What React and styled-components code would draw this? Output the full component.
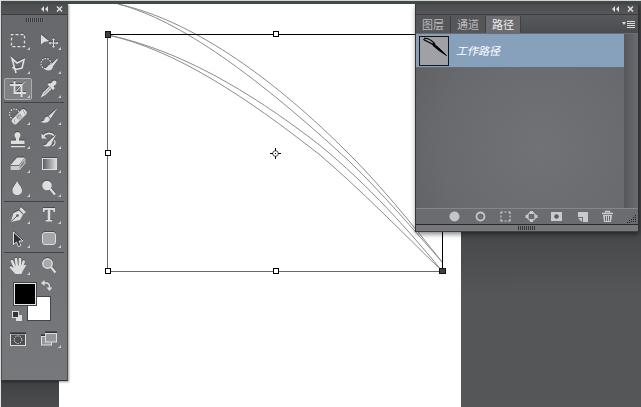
import { useState } from "react";
import styled, { createGlobalStyle } from "styled-components";

const GlobalStyle = createGlobalStyle`
  * {
    box-sizing: border-box;
  }
  body {
    margin: 0;
    font-family: "Liberation Sans", "Noto Sans CJK SC", sans-serif;
    background: #555657;
  }
  button {
    padding: 0;
    border: 0;
    background: none;
    color: inherit;
    font: inherit;
  }
  svg {
    display: block;
  }
`;

const light = "#dcdddd";

const MarqueeIcon = () => (
  <svg width="20" height="20" viewBox="0 0 20 20">
    <rect x="3.5" y="3.5" width="13" height="12" fill="none" stroke={light} strokeWidth="1.4" strokeDasharray="3 2" strokeDashoffset="1" />
  </svg>
);

const MoveIcon = () => (
  <svg width="20" height="20" viewBox="0 0 20 20">
    <path d="M2 3.500v10l3-2.600 5-1z" fill={light} />
    <path d="M14.500 8v8M10.500 12h8" stroke={light} fill="none" />
    <path d="M14.500 7l1.500 2h-3zM14.500 17l1.500-2h-3zM9.500 12l2-1.500v3zM19.500 12l-2-1.500v3z" fill={light} />
  </svg>
);

const LassoIcon = () => (
  <svg width="20" height="20" viewBox="0 0 20 20">
    <path d="M4 3.500l5 4.500 7-3.500-2 8.500-7 1.500zM6.500 14l-2-2M7 13.500l1 4.500" fill="none" stroke={light} strokeWidth="1.700" />
  </svg>
);

const QuickSelectIcon = () => (
  <svg width="20" height="20" viewBox="0 0 20 20">
    <circle cx="7" cy="8.500" r="5" fill="none" stroke={light} strokeWidth="1.200" strokeDasharray="1.500 1.200" />
    <path d="M18.500 3l-7 7 2 2 5-7z" fill={light} />
    <path d="M12 9.500c-2-.5-3 1-4 2.500-.7 1-2 1.500-3 1.500 2 2.800 8 3 9-1.500z" fill={light} />
  </svg>
);

const CropIcon = () => (
  <svg width="20" height="20" viewBox="0 0 20 20">
    <path d="M6.500 2v12H18M2 6h11.500v12" fill="none" stroke={light} strokeWidth="2" />
    <path d="M7 13.500L17 2.500" stroke={light} />
  </svg>
);

const EyedropperIcon = () => (
  <svg width="20" height="20" viewBox="0 0 20 20">
    <path d="M11.500 4.500l2.500-2.500c2.500-1.500 4.500 1 3 3L14.500 7.500l1.500 1.500-2 2-5.500-5.500L10 4z" fill={light} />
    <path d="M10.500 8l-6 6-1.500 3 3-1.500 6-6" fill="#8b8c8e" stroke={light} strokeWidth="1.300" />
  </svg>
);

const HealingIcon = () => (
  <svg width="20" height="20" viewBox="0 0 20 20">
    <circle cx="6.500" cy="8" r="5" fill="none" stroke={light} strokeWidth="1.200" strokeDasharray="1.500 1.200" />
    <rect x="2" y="7.500" width="18" height="6.500" rx="2.500" fill={light} transform="rotate(-45 11 10.500)" />
    <rect x="8.500" y="7.500" width="5" height="6.500" fill="#b9babb" transform="rotate(-45 11 10.500)" />
    <path d="M10 10h1M9 12h1M12 9h1M6 14h1M15 5h1M6 16h1M16 7h1" stroke="#77787a" />
  </svg>
);

const BrushIcon = () => (
  <svg width="20" height="20" viewBox="0 0 20 20">
    <path d="M18.500 2l-9 8 2 2.500z" fill={light} />
    <path d="M9 10.500c-2-.3-3 1-3.500 2.500C5 15 3.500 15.500 1.500 15.500c3 2.500 8.500 1.500 9.500-2.500z" fill={light} />
  </svg>
);

const StampIcon = () => (
  <svg width="20" height="20" viewBox="0 0 20 20">
    <path d="M8 9c0-1.500-1.500-2-1.500-4 0-4 6-4 6 0 0 2-1.500 2.500-1.500 4v1.500h5.500V14H3v-3.500h5z" fill={light} />
    <path d="M3 16.500h14" stroke={light} strokeWidth="1.500" />
  </svg>
);

const HistoryIcon = () => (
  <svg width="20" height="20" viewBox="0 0 20 20">
    <path d="M17.500 4l-7.500 7 2.500 2z" fill={light} />
    <path d="M11 11c-2 0-2.500 1.500-3 2.500-.7 1.200-2 1.500-4 1.500 3 2.500 8 2 9-2z" fill={light} />
    <path d="M4 6.500c3-4 8-4 11-1" fill="none" stroke={light} strokeWidth="1.600" />
    <path d="M2.500 3.500v5H8z" fill={light} />
    <path d="M15.500 10c1 2.500 0 5-2 6" fill="none" stroke={light} strokeWidth="1.200" />
  </svg>
);

const EraserIcon = () => (
  <svg width="20" height="20" viewBox="0 0 20 20">
    <path d="M9 3.500h8L11 11H2.500z" fill={light} />
    <path d="M2.500 11.700H11V16H2.500z" fill="#c9cacb" />
    <path d="M11.700 11.500L17 4.700v4.500L11.700 15.500z" fill="#88898b" stroke={light} strokeWidth=".8" />
  </svg>
);

const GradientIcon = () => (
  <svg width="20" height="20" viewBox="0 0 20 20">
    <defs>
      <linearGradient id="fade">
        <stop offset="0" stopColor="#57585a" />
        <stop offset="1" stopColor="#e0e0e0" />
      </linearGradient>
    </defs>
    <rect x="3.500" y="4.500" width="14" height="11" fill="url(#fade)" stroke={light} />
  </svg>
);

const DropIcon = () => (
  <svg width="20" height="20" viewBox="0 0 20 20">
    <path d="M9 2.500c1 3.500 5 6 5 10 0 6-9.500 6-9.500 0 0-4 3.500-6 4.500-10z" fill={light} />
  </svg>
);

const DodgeIcon = () => (
  <svg width="20" height="20" viewBox="0 0 20 20">
    <circle cx="8" cy="7.500" r="4.800" fill={light} />
    <path d="M11 10.500l5 6" stroke={light} strokeWidth="2.200" />
  </svg>
);

const PenIcon = () => (
  <svg width="20" height="20" viewBox="0 0 20 20">
    <path d="M2.500 17L5.500 8l5.500-2.500 4 4-3 5.500z" fill={light} />
    <path d="M11.500 4.500L13 2l5 5-2.500 2z" fill={light} />
    <path d="M3 16.500l6-5.500" stroke="#5d5e60" />
    <circle cx="9.500" cy="10.500" r="1.300" fill="#5d5e60" />
  </svg>
);

const TypeIcon = () => (
  <svg width="20" height="20" viewBox="0 0 20 20">
    <path d="M4 3h12v4h-1.300c-.2-1.500-.7-2.200-2-2.200h-1.400V14c0 .8.500 1.200 2 1.200V16.500H6.700V15.200c1.500 0 2-.4 2-1.200V4.800H7.300c-1.300 0-1.800.7-2 2.200H4z" fill={light} />
  </svg>
);

const PathSelectIcon = () => (
  <svg width="20" height="20" viewBox="0 0 20 20">
    <path d="M5.500 3v12.500l3-2.500 2 4.500 2.500-1-2-4.500h4z" fill="#303133" stroke={light} />
  </svg>
);

const ShapeIcon = () => (
  <svg width="20" height="20" viewBox="0 0 20 20">
    <rect x="3.500" y="3.500" width="13" height="12" rx="2.500" fill="#a3a5a7" stroke={light} />
  </svg>
);

const HandIcon = () => (
  <svg width="20" height="20" viewBox="0 0 20 20">
    <path d="M4 5l3 7M8 3l1 8M12 3l-.3 8M15.700 5.500L13.500 12" stroke={light} strokeWidth="2.500" strokeLinecap="round" />
    <path d="M6.500 10h8l2.500-1.500c1-.3 1.500.8.8 1.500L15 14.500l-1.500 3.500H7.500L2 12c-.8-1.500.7-2 1.700-1.500L7 12.500z" fill={light} />
  </svg>
);

const ZoomIcon = () => (
  <svg width="20" height="20" viewBox="0 0 20 20">
    <circle cx="8.500" cy="7.500" r="4.700" fill="#a8a9ab" stroke={light} strokeWidth="1.500" />
    <path d="M12 11l4.500 5.500" stroke={light} strokeWidth="2.200" />
  </svg>
);

const QuickMaskIcon = () => (
  <svg width="16" height="13" viewBox="0 0 16 13">
    <rect x=".5" y="1" width="15" height="11.500" fill="#505153" stroke={light} />
    <path d="M0 .5h16" stroke="#333436" />
    <circle cx="8" cy="6.700" r="3.800" fill="none" stroke={light} strokeDasharray="1.400 1" />
  </svg>
);

const ScreenModeIcon = () => (
  <svg width="16" height="14" viewBox="0 0 16 14">
    <rect x=".5" y="4.500" width="10" height="8.500" fill="#95979a" stroke={light} />
    <rect x="4.500" y="1.500" width="11" height="8.500" fill="#95979a" stroke={light} />
    <path d="M4 .5h12M0 3.500h4" stroke="#333436" />
  </svg>
);

const SwapIcon = () => (
  <svg width="11" height="11" viewBox="0 0 11 11">
    <path d="M2 3h3q3.500 0 3.500 4v1" fill="none" stroke={light} strokeWidth="1.300" />
    <path d="M0 3l3.500-3v6zM8.500 11L5.500 7.500h6z" fill={light} />
  </svg>
);

const DefaultColorsIcon = () => (
  <svg width="10" height="10" viewBox="0 0 10 10">
    <rect x="4" y="4" width="6" height="6" fill={light} />
    <rect x=".5" y=".5" width="6" height="6" fill="#333436" stroke={light} />
  </svg>
);

const CollapseIcon = () => (
  <svg width="7" height="6" viewBox="0 0 7 6">
    <path d="M3 0v6L0 3zM7 0v6L4 3z" fill={light} />
  </svg>
);

const CloseIcon = () => (
  <svg width="7" height="6" viewBox="0 0 7 6">
    <path d="M1 .5l5 5M6 .5l-5 5" stroke={light} strokeWidth="1.500" />
  </svg>
);

const toolGroups = [
  [
    ["Rectangular marquee", MarqueeIcon],
    ["Move", MoveIcon],
    ["Polygonal lasso", LassoIcon],
    ["Quick selection", QuickSelectIcon],
    ["Crop", CropIcon],
    ["Eyedropper", EyedropperIcon],
  ],
  [
    ["Spot healing brush", HealingIcon],
    ["Brush", BrushIcon],
    ["Clone stamp", StampIcon],
    ["History brush", HistoryIcon],
    ["Eraser", EraserIcon],
    ["Gradient", GradientIcon],
    ["Blur", DropIcon],
    ["Dodge", DodgeIcon],
  ],
  [
    ["Pen", PenIcon],
    ["Type", TypeIcon],
    ["Path selection", PathSelectIcon],
    ["Rounded rectangle", ShapeIcon],
  ],
  [
    ["Hand", HandIcon],
    ["Zoom", ZoomIcon],
  ],
];

const WindowButtons = () => (
  <>
    <button aria-label="Collapse"><CollapseIcon /></button>
    <button aria-label="Close"><CloseIcon /></button>
  </>
);

const Toolbox = () => {
  const [tool, setTool] = useState("Crop");

  return (
    <ToolPanel aria-label="Tools">
      <TitleBar>
        <WindowButtons />
      </TitleBar>
      <GripArea>
        <Grip />
      </GripArea>
      {toolGroups.map((group, i) => (
        <ToolGroup key={i}>
          {group.map(([name, Icon]) => (
            <ToolButton
              key={name}
              aria-label={name}
              $active={tool === name}
              $flyout={name !== "Zoom"}
              onClick={() => setTool(name)}
            >
              <Icon />
            </ToolButton>
          ))}
        </ToolGroup>
      ))}
      <Colors>
        <Foreground aria-label="Foreground color" />
        <Background aria-label="Background color" />
        <SwapButton aria-label="Swap colors"><SwapIcon /></SwapButton>
        <ResetButton aria-label="Default colors"><DefaultColorsIcon /></ResetButton>
      </Colors>
      <ToolGroup>
        <ToolButton aria-label="Quick mask"><QuickMaskIcon /></ToolButton>
        <ToolButton aria-label="Screen mode" $flyout><ScreenModeIcon /></ToolButton>
      </ToolGroup>
    </ToolPanel>
  );
};

const handles = [[275, 34], [107, 153], [107, 271], [275, 271]];

const Artwork = () => (
  <svg width="402" height="403" viewBox="59 4 402 403">
    <g fill="none" stroke="#8c8c90">
      <path d="M118 4C180 20 258 77 350 162C382 193 414 230 442 262" />
      <path d="M118 4C190 20 268 74 343 148C378 182 412 224 442 262" />
      <path d="M108 35C175 50 245 96 320 155C360 189 402 232 442 271" />
      <path d="M108 35C180 50 250 92 313 140C358 175 402 222 442 271" />
    </g>
    <path d="M107 34.500H442.500V271" fill="none" stroke="#000" />
    <path d="M107.500 34V271.500H442" fill="none" stroke="#69696b" />
    {handles.map(([x, y]) => (
      <rect key={x + "-" + y} x={x - 1.5} y={y - 2.5} width="5" height="5" fill="#fff" stroke="#000" />
    ))}
    <rect x="105.500" y="31.500" width="5" height="6" fill="#3f4042" stroke="#111" />
    <rect x="439.500" y="268.500" width="6" height="5" fill="#3f4042" stroke="#111" />
    <circle cx="275.500" cy="153.500" r="2.800" fill="#fff" stroke="#333" strokeWidth=".9" />
    <path d="M275.500 148v3M275.500 156v3M270 153.500h3M278 153.500h3M275 153.500h1" stroke="#000" />
  </svg>
);

const footerActions = [
  ["Fill path", <circle cx="7.500" cy="7.500" r="5" fill="#c4c5c7" />],
  ["Stroke path", <circle cx="7.500" cy="7.500" r="4" fill="none" stroke="#c4c5c7" strokeWidth="1.800" />],
  [
    "Load path as selection",
    <path d="M3 5V3h2M6.500 3h2M10 3h2v2M12 6.500v2M12 10v2h-2M8.500 12h-2M5 12H3v-2M3 8.500v-2" fill="none" stroke="#c9cacc" strokeWidth="1.200" />,
  ],
  [
    "Make work path",
    <>
      <circle cx="7.500" cy="7.500" r="4" fill="none" stroke="#c9cacc" strokeWidth="1.300" />
      <path d="M6 2h3v3H6zM6 10h3v3H6zM1.500 6h3v3h-3zM10.500 6h3v3h-3z" fill="#c9cacc" />
    </>,
  ],
  [
    "Add mask",
    <>
      <path d="M2 3h11v9H2z" fill="#c9cacc" />
      <circle cx="7.500" cy="7.500" r="2.300" fill="#5b5c5f" />
    </>,
  ],
  ["New path", <path d="M3 3h10v10H8V8H3zM3 9h4v4z" fill="#c9cacc" />],
  [
    "Delete path",
    <>
      <path d="M2 4.500h11M5.500 3.500v-1h4v1" fill="none" stroke="#c9cacc" strokeWidth="1.400" />
      <path d="M3 6h9l-1 7H4z" fill="#c9cacc" />
      <path d="M5.500 7v5M7.500 7v5M9.500 7v5" stroke="#67686b" />
    </>,
  ],
];

const PathsPanel = () => {
  const [tab, setTab] = useState("路径");

  return (
    <Panel>
      <TitleBar>
        <WindowButtons />
      </TitleBar>
      <Tabs role="tablist">
        {["图层", "通道", "路径"].map((name) => (
          <Tab key={name} role="tab" aria-selected={tab === name} $active={tab === name} onClick={() => setTab(name)}>
            {name}
          </Tab>
        ))}
        <MenuButton aria-label="Panel menu">
          <svg width="13" height="9" viewBox="0 0 13 9">
            <path d="M0 2h4L2 5z" fill={light} />
            <path d="M5 1.500h8M5 3.500h8M5 5.500h8M5 7.500h8" stroke={light} />
          </svg>
        </MenuButton>
      </Tabs>
      <PanelBody>
        <PathList>
          <PathRow>
            <Thumb>
              <svg width="28" height="28" viewBox="0 0 28 28">
                <path d="M4 1.500c4-.5 7 1 11 5.500M3.500 2c1 2.500 5 2 10 6" fill="none" stroke="#111" strokeWidth="1.300" />
                <path d="M13 6l8 7 5.500 5.500L19 13.500l-6-5z" fill="#000" stroke="#000" />
              </svg>
            </Thumb>
            <PathName>工作路径</PathName>
          </PathRow>
        </PathList>
        <ScrollTrack />
      </PanelBody>
      <PanelFooter>
        {footerActions.map(([name, drawing]) => (
          <button key={name} aria-label={name}>
            <svg width="15" height="15" viewBox="0 0 15 15">{drawing}</svg>
          </button>
        ))}
        <ResizeCorner width="10" height="8" viewBox="0 0 10 8">
          <path d="M8.500 0v8M6.500 2v6M4.500 4v4M2.500 5v3M.5 7v1" stroke="#242527" strokeDasharray="1 1" />
        </ResizeCorner>
      </PanelFooter>
      <BottomBar>
        <Grip />
      </BottomBar>
    </Panel>
  );
};

export default function App() {
  return (
    <Desktop>
      <GlobalStyle />
      <Gutter />
      <Sheet>
        <Artwork />
      </Sheet>
      <RightGutter />
      <Toolbox />
      <PathsPanel />
    </Desktop>
  );
}

const Desktop = styled.div`
  position: relative;
  display: flex;
  min-height: 100vh;
  padding-top: 3px;
  background: #434b49;
  border-top: 1px solid #d4d6d5;
  border-left: 1px solid #e4e4e4;
`;

const Gutter = styled.div`
  flex: 0 0 58px;
  background: linear-gradient(#414244 380px, #4c4d4f);
`;

const RightGutter = styled.div`
  flex: 0 0 180px;
  background: linear-gradient(#454647 225px, #555657 290px);
`;

const Sheet = styled.main`
  flex: 1;
  min-width: 0;
  overflow: hidden;
  background: #fff;
`;

const ToolPanel = styled.aside`
  position: absolute;
  top: 3px;
  left: 0;
  width: 67px;
  padding-bottom: 28px;
  background: linear-gradient(#67686b, #717275 60%, #77787b);
  border-left: 1px solid #4c4d4f;
  border-right: 1px solid #4c4d4f;
  border-bottom: 1px solid #333436;
  box-shadow: 1px 1px 2px rgba(0, 0, 0, 0.4);
`;

const TitleBar = styled.header`
  display: flex;
  align-items: center;
  justify-content: flex-end;
  gap: 8px;
  height: 11px;
  padding-right: 4px;
  background: linear-gradient(#4b4c4f, #56575a);
  border-bottom: 1px solid #3b3c3e;
`;

const GripArea = styled.div`
  display: flex;
  justify-content: center;
  height: 13px;
  padding-top: 3px;
`;

const Grip = styled.div`
  width: 18px;
  height: 4px;
  background: repeating-linear-gradient(90deg, #353638 0 1px, #77787b 1px 2px);
`;

const ToolGroup = styled.div`
  display: grid;
  grid-template-columns: 28px 28px;
  column-gap: 3px;
  margin: 0 3px 0 2px;
  padding: 1px 0;
  & + & {
    border-top: 1px solid #424346;
  }
`;

const ToolButton = styled.button`
  position: relative;
  display: flex;
  align-items: center;
  justify-content: center;
  width: 28px;
  height: 22px;
  margin: 1px 0;
  border: 1px solid ${(p) => (p.$active ? "#acadae" : "transparent")};
  border-radius: 2px;
  background: ${(p) => (p.$active ? "#808184" : "none")};
  svg {
    flex: none;
    filter: drop-shadow(0 -1px 0 rgba(35, 36, 38, 0.5));
  }
  &::after {
    content: "";
    display: ${(p) => (p.$flyout ? "block" : "none")};
    position: absolute;
    right: 1px;
    bottom: 1px;
    border-left: 3px solid transparent;
    border-bottom: 3px solid #c9cacb;
  }
`;

const Colors = styled.div`
  position: relative;
  height: 47px;
`;

const Foreground = styled.button`
  position: absolute;
  z-index: 1;
  top: 3px;
  left: 11px;
  width: 24px;
  height: 24px;
  background: #000;
  border: 1px solid #444547;
  box-shadow: inset 0 0 0 1px #e8e8e8;
`;

const Background = styled.button`
  position: absolute;
  top: 17px;
  left: 25px;
  width: 24px;
  height: 25px;
  background: #fff;
  border: 1px solid #444547;
`;

const SwapButton = styled.button`
  position: absolute;
  top: 1px;
  right: 15px;
`;

const ResetButton = styled.button`
  position: absolute;
  top: 32px;
  left: 10px;
`;

const Panel = styled.section`
  position: absolute;
  top: 3px;
  right: 3px;
  width: 223px;
  background: #6b6c6f;
  border-left: 1px solid #333436;
  box-shadow: 1px 2px 5px rgba(0, 0, 0, 0.5);
`;

const Tabs = styled.div`
  display: flex;
  height: 19px;
  padding-top: 1px;
  background: linear-gradient(#58595c, #4b4c4f);
  border-bottom: 1px solid #6b6c6f;
`;

const Tab = styled.button`
  padding: 0 6px;
  font-size: 11px;
  line-height: 16px;
  color: ${(p) => (p.$active ? "#f2f2f2" : "#bbbcbe")};
  background: ${(p) => (p.$active ? "#6b6c6f" : "#55565a")};
  border-right: 1px solid #3f4042;
`;

const MenuButton = styled.button`
  margin-left: auto;
  padding-right: 3px;
`;

const PanelBody = styled.div`
  display: flex;
  height: 174px;
`;

const PathList = styled.div`
  flex: 1;
  background: radial-gradient(circle at 60% 65%, #717276, #696a6d 60%, #5d5e61);
`;

const ScrollTrack = styled.div`
  width: 14px;
  background: linear-gradient(90deg, #56575a, #6b6c6f);
`;

const PathRow = styled.div`
  display: flex;
  align-items: center;
  gap: 7px;
  height: 34px;
  padding-left: 3px;
  background: #87a1bd;
  border-bottom: 1px solid #606f80;
`;

const Thumb = styled.div`
  width: 30px;
  height: 30px;
  border: 1px solid #15161a;
  background: #a0a1a5;
`;

const PathName = styled.span`
  color: #fff;
  font-size: 11px;
  font-style: italic;
  line-height: 16px;
`;

const PanelFooter = styled.footer`
  position: relative;
  display: flex;
  align-items: center;
  justify-content: space-between;
  height: 17px;
  padding: 0 23px 0 31px;
  border-top: 1px solid #85868a;
  border-bottom: 1px solid #292a2c;
  background: #6b6c6f;
`;

const ResizeCorner = styled.svg`
  position: absolute;
  right: 1px;
  bottom: 1px;
`;

const BottomBar = styled.div`
  display: flex;
  align-items: center;
  justify-content: center;
  height: 7px;
  background: #77787b;
  border-bottom: 1px solid #3f4042;
`;
